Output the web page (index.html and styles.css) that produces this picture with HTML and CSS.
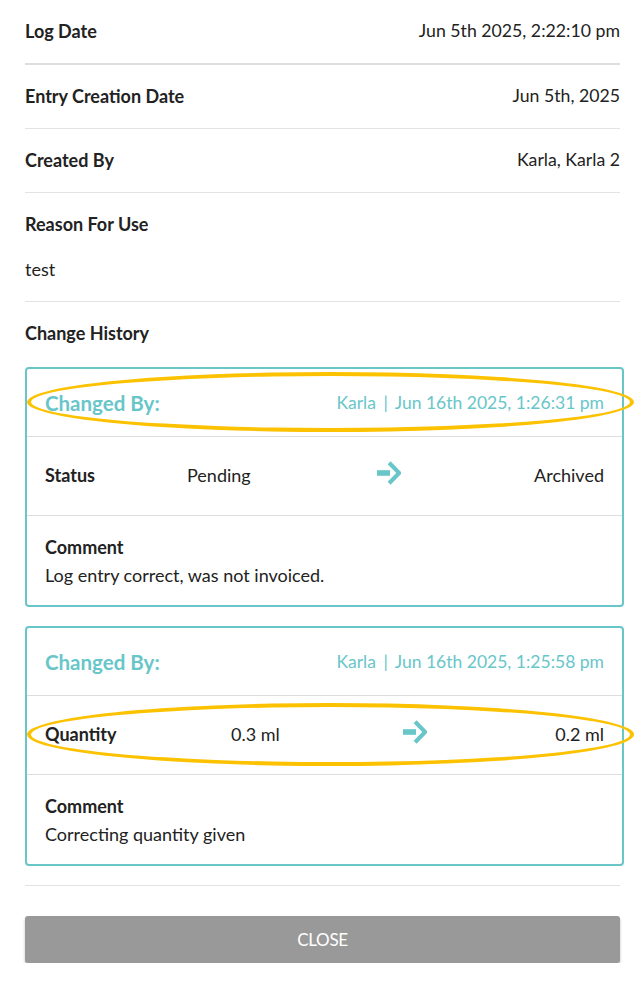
FILE: index.html
```html
<!DOCTYPE html>
<html lang="en">
<head>
<meta charset="utf-8">
<title>Log Entry</title>
<link rel="stylesheet" href="styles.css">
</head>
<body>
<main class="sheet">
  <div class="row row-first">
    <span class="label">Log Date</span>
    <span class="value">Jun 5th 2025, 2:22:10 pm</span>
  </div>
  <div class="row">
    <span class="label">Entry Creation Date</span>
    <span class="value">Jun 5th, 2025</span>
  </div>
  <div class="row">
    <span class="label">Created By</span>
    <span class="value">Karla, Karla 2</span>
  </div>
  <div class="row row-stack">
    <span class="label">Reason For Use</span>
    <p class="text">test</p>
  </div>
  <div class="history">
    <h3 class="label">Change History</h3>

    <section class="card">
      <div class="card-head marked">
        <span class="changed">Changed By:</span>
        <span class="meta">Karla <span class="sep">|</span> Jun 16th 2025, 1:26:31 pm</span>
      </div>
      <div class="change change-status">
        <span class="label field">Status</span>
        <span class="old">Pending</span>
        <span class="arrow-wrap">
          <svg class="arrow" viewBox="0 0 24 24" aria-hidden="true"><path d="M0 9.2h13v5.6H0z"/><path d="M10.6 3.3 13.6 0.3 24 11 24 13 13.6 23.7 10.6 20.7 19.3 12z"/></svg>
        </span>
        <span class="new">Archived</span>
      </div>
      <div class="comment">
        <span class="label">Comment</span>
        <p class="text">Log entry correct, was not invoiced.</p>
      </div>
    </section>

    <section class="card">
      <div class="card-head">
        <span class="changed">Changed By:</span>
        <span class="meta">Karla <span class="sep">|</span> Jun 16th 2025, 1:25:58 pm</span>
      </div>
      <div class="change change-qty marked">
        <span class="label field">Quantity</span>
        <span class="old">0.3 ml</span>
        <span class="arrow-wrap">
          <svg class="arrow" viewBox="0 0 24 24" aria-hidden="true"><path d="M0 9.2h13v5.6H0z"/><path d="M10.6 3.3 13.6 0.3 24 11 24 13 13.6 23.7 10.6 20.7 19.3 12z"/></svg>
        </span>
        <span class="new">0.2 ml</span>
      </div>
      <div class="comment">
        <span class="label">Comment</span>
        <p class="text">Correcting quantity given</p>
      </div>
    </section>
  </div>
  <footer class="footer">
    <button class="close-btn" type="button">Close</button>
  </footer>
</main>
</body>
</html>
```
FILE: styles.css
```css
* { box-sizing: border-box; }

html, body {
  margin: 0;
  padding: 0;
  background: #ffffff;
}

body {
  font-family: Lato, "Open Sans", "Liberation Sans", sans-serif;
  color: #222222;
  font-size: 18px;
  line-height: 24px;
}

.sheet {
  padding: 0 20px 0 25px;
}

.row {
  display: flex;
  justify-content: space-between;
  align-items: center;
  padding: 19px 0 20px;
  border-bottom: 1px solid #e3e3e3;
}

.row-first {
  border-bottom: 2px solid #dedede;
}

.row-stack {
  flex-direction: column;
  align-items: flex-start;
}

.label {
  font-weight: 700;
  margin: 0;
  font-size: 18px;
  line-height: 24px;
}

.value {
  font-weight: 400;
  font-size: 17.7px;
}

.text {
  margin: 21px 0 0;
}

.history {
  padding-top: 19px;
}

.card {
  border: 2px solid #68c6c9;
  border-radius: 4px;
  margin: 22px -4px 0 0;
}

.card + .card {
  margin-top: 19px;
}

.card-head {
  position: relative;
  display: flex;
  justify-content: space-between;
  align-items: center;
  padding: 21px 18px 20px;
  border-bottom: 1px solid #dddddd;
  color: #68c6c9;
}

.changed {
  font-weight: 700;
  font-size: 20.5px;
  line-height: 26px;
}

.meta {
  font-size: 17.5px;
  line-height: 26px;
}

.sep {
  padding: 0 3px;
}

.change {
  position: relative;
  display: flex;
  align-items: center;
  padding: 26px 18px 28px;
  border-bottom: 1px solid #dddddd;
}

.field {
  flex: none;
}

.change-status .field { width: 142px; }
.change-qty .field { width: 186px; }

.arrow-wrap {
  flex: 1;
  display: flex;
  justify-content: center;
  margin-left: -6px;
}

.arrow {
  width: 24px;
  height: 24px;
  fill: #68c6c9;
  display: block;
  margin-top: -4px;
}

.comment {
  padding: 19px 18px 18px;
}

.comment .text {
  margin: 4px 0 0;
}

.marked::after {
  content: "";
  position: absolute;
  border: 4px solid #fcc200;
  border-radius: 50%;
  pointer-events: none;
}

.card-head.marked::after {
  left: 0;
  right: -12px;
  top: 3px;
  bottom: 4px;
}

.change.marked::after {
  left: 0;
  right: -12px;
  top: 7px;
  bottom: 8px;
}

.footer {
  margin-top: 19px;
  border-top: 1px solid #e3e3e3;
  padding-top: 30px;
}

.close-btn {
  display: block;
  width: 100%;
  height: 47px;
  border: none;
  border-radius: 3px;
  background: #999999;
  color: #ffffff;
  font-family: Lato, "Open Sans", "Liberation Sans", sans-serif;
  font-size: 17px;
  text-transform: uppercase;
  letter-spacing: -0.3px;
  box-shadow: 0 2px 3px rgba(0, 0, 0, 0.25);
}
```
